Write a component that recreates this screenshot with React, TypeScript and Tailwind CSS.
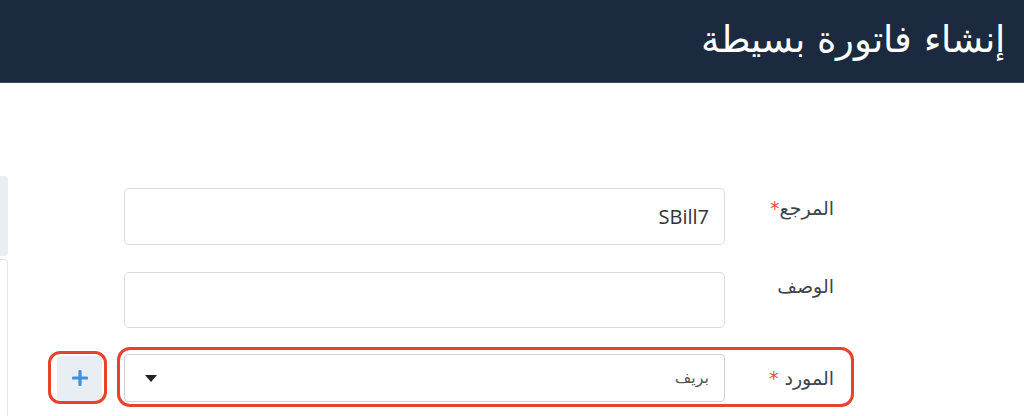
import React from 'react';

const arabic = { fontFamily: '"DejaVu Sans", "Noto Sans", sans-serif' };

const Label: React.FC<{ text: string; required?: boolean; spaced?: boolean }> = ({ text, required, spaced }) => (
    <div className="w-[109px] shrink-0 text-right text-[19px] text-[#3d4450]" style={arabic}>
        {text}
        {required && <span className={`text-[#e0523f] ${spaced ? 'mr-[6px]' : ''}`}>*</span>}
    </div>
);

export default function App() {
    return (
        <div className="relative w-[1024px] h-[416px] overflow-hidden bg-white">
            {/* header */}
            <div className="h-[83px] bg-[#1b2a3e] border-b border-[#3a4b5e] flex items-center justify-end pr-[19px]">
                <h1 dir="rtl" className="text-[37px] font-extralight text-white leading-none pb-[4px]" style={arabic}>
                    إنشاء فاتورة بسيطة
                </h1>
            </div>

            <div className="flex">
                {/* partial side panel on the left */}
                <div className="w-[8px] shrink-0 pt-[93px]">
                    <div className="h-[80px] bg-[#e8eef2] rounded-r-[4px]" />
                    <div className="mt-[3px] h-[200px] border-r border-t border-[#e3e6e9] rounded-tr-[4px]" />
                </div>

                {/* form */}
                <div dir="rtl" className="flex-1 pt-[105px] pr-[190px]">
                    <div className="flex items-start">
                        <div className="pt-[6px]"><Label text="المرجع" required /></div>
                        <div className="w-[601px] h-[57px] border border-[#d9dcdf] rounded-[5px] flex items-center px-[15px] text-[20px] text-[#333]" style={{ fontFamily: '"Open Sans", sans-serif' }}>
                            SBill7
                        </div>
                    </div>

                    <div className="flex items-start mt-[27px]">
                        <div className="pt-[0px]"><Label text="الوصف" /></div>
                        <div className="w-[601px] h-[56px] border border-[#d9dcdf] rounded-[5px]" />
                    </div>

                    <div className="flex items-center mt-[26px]">
                        <Label text="المورد" required spaced />
                        <div className="w-[601px] h-[48px] border border-[#cfd2d5] rounded-[4px] flex items-center justify-between pr-[15px] pl-[20px]">
                            <span className="text-[16px] text-[#555]" style={arabic}>بريف</span>
                            <svg width="12" height="7" viewBox="0 0 12 7"><path d="M0 0h12L6 7z" fill="#222" /></svg>
                        </div>
                        <div className="mr-[22px] w-[45px] h-[45px] bg-[#e8eef2] rounded-[4px] flex items-center justify-center">
                            <svg width="16" height="16" viewBox="0 0 16 16">
                                <path d="M8 1.5v13M1.5 8h13" stroke="#3f8fdc" strokeWidth="3.2" strokeLinecap="round" />
                            </svg>
                        </div>
                    </div>
                </div>
            </div>

            {/* highlight annotations */}
            <div className="absolute left-[117px] top-[347px] w-[737px] h-[60px] border-[3px] border-[#e8412c] rounded-[13px] pointer-events-none" />
            <div className="absolute left-[48px] top-[351px] w-[59px] h-[53px] border-[3px] border-[#e8412c] rounded-[12px] pointer-events-none" />
        </div>
    );
}
